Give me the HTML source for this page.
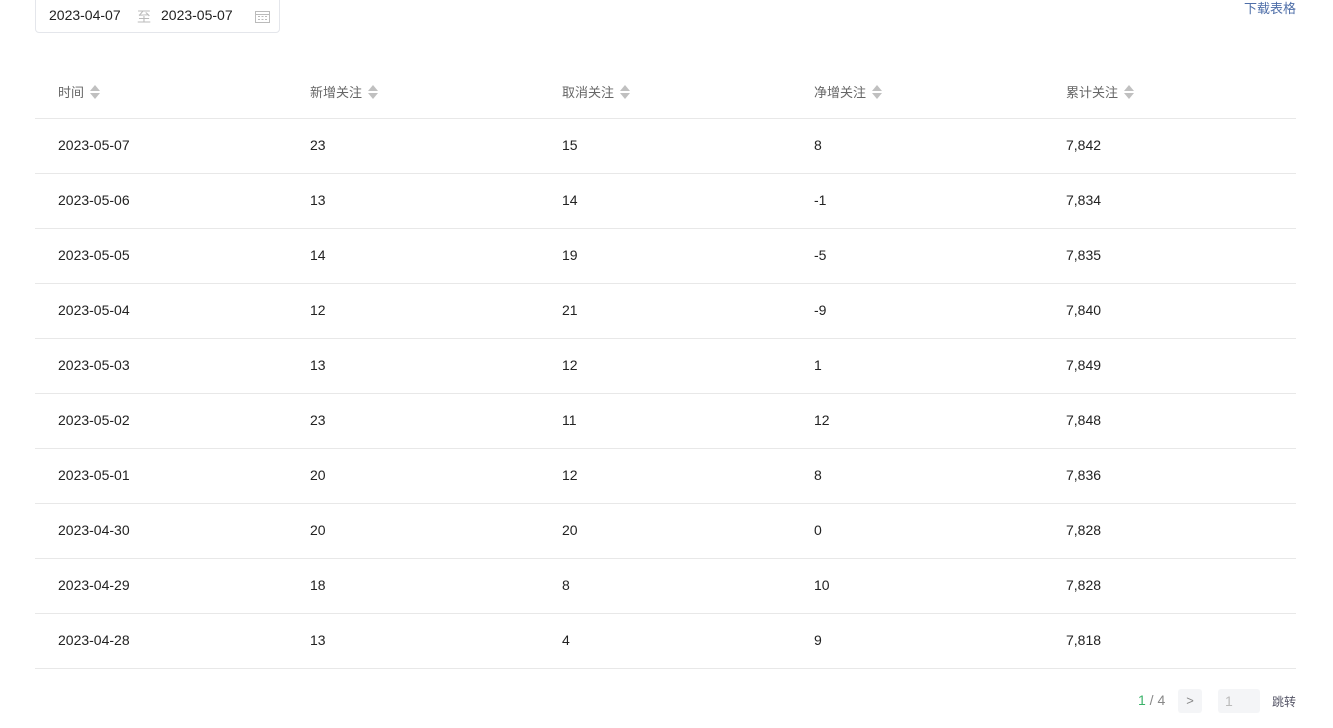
<!DOCTYPE html>
<html><head><meta charset="utf-8"><style>
body{margin:0;width:1333px;height:728px;background:#fff;font-family:"Liberation Sans","Noto Sans CJK SC",sans-serif;color:#333;position:relative;overflow:hidden}
.date{position:absolute;left:35px;top:-6px;width:245px;height:39px;border:1px solid #e4e6eb;border-radius:4px;box-sizing:border-box;font-size:14px;color:#222}
.date span{position:absolute;top:12px}
.dl{position:absolute;right:37px;top:-2px;font-size:13px;color:#4e6ea8}
table{position:absolute;left:35px;top:65px;width:1261px;border-collapse:collapse;font-size:14px;table-layout:fixed}
th{height:53px;text-align:left;font-weight:normal;color:#666;font-size:13px;padding:0 0 0 23px;border-bottom:1px solid #e8e8e8}
td{height:54px;padding:0 0 0 23px;border-bottom:1px solid #e8e8e8;color:#222;vertical-align:middle}
td span{position:relative;top:-1px}
.s{display:inline-block;vertical-align:middle;margin-left:6px;position:relative;width:10px;height:16px;top:-1px}
.s:before,.s:after{content:"";position:absolute;left:0;border-left:5px solid transparent;border-right:5px solid transparent}
.s:before{top:1px;border-bottom:6px solid #c0c0c0}
.s:after{top:9px;border-top:6px solid #c0c0c0}
.pg{position:absolute;top:689px;font-size:14px}
</style></head><body>
<div class="date"><span style="left:13px">2023-04-07</span><span style="left:101px;color:#bbb">至</span><span style="left:125px">2023-05-07</span>
<svg style="position:absolute;left:219px;top:15px" width="15" height="13" viewBox="0 0 15 13"><rect x="0.5" y="1.5" width="14" height="11" fill="none" stroke="#bbb"/><line x1="0.5" y1="4.5" x2="14.5" y2="4.5" stroke="#bbb"/><g fill="#bbb"><rect x="3" y="6" width="2" height="1"/><rect x="6.5" y="6" width="2" height="1"/><rect x="10" y="6" width="2" height="1"/><rect x="3" y="9" width="2" height="1"/><rect x="6.5" y="9" width="2" height="1"/><rect x="10" y="9" width="2" height="1"/></g></svg></div>
<div class="dl">下载表格</div>
<table>
<colgroup><col style="width:252px"><col style="width:252px"><col style="width:252px"><col style="width:252px"><col style="width:253px"></colgroup>
<tr><th>时间<i class="s"></i></th><th>新增关注<i class="s"></i></th><th>取消关注<i class="s"></i></th><th>净增关注<i class="s"></i></th><th>累计关注<i class="s"></i></th></tr>
<tr><td><span>2023-05-07</span></td><td><span>23</span></td><td><span>15</span></td><td><span>8</span></td><td><span>7,842</span></td></tr>
<tr><td><span>2023-05-06</span></td><td><span>13</span></td><td><span>14</span></td><td><span>-1</span></td><td><span>7,834</span></td></tr>
<tr><td><span>2023-05-05</span></td><td><span>14</span></td><td><span>19</span></td><td><span>-5</span></td><td><span>7,835</span></td></tr>
<tr><td><span>2023-05-04</span></td><td><span>12</span></td><td><span>21</span></td><td><span>-9</span></td><td><span>7,840</span></td></tr>
<tr><td><span>2023-05-03</span></td><td><span>13</span></td><td><span>12</span></td><td><span>1</span></td><td><span>7,849</span></td></tr>
<tr><td><span>2023-05-02</span></td><td><span>23</span></td><td><span>11</span></td><td><span>12</span></td><td><span>7,848</span></td></tr>
<tr><td><span>2023-05-01</span></td><td><span>20</span></td><td><span>12</span></td><td><span>8</span></td><td><span>7,836</span></td></tr>
<tr><td><span>2023-04-30</span></td><td><span>20</span></td><td><span>20</span></td><td><span>0</span></td><td><span>7,828</span></td></tr>
<tr><td><span>2023-04-29</span></td><td><span>18</span></td><td><span>8</span></td><td><span>10</span></td><td><span>7,828</span></td></tr>
<tr><td><span>2023-04-28</span></td><td><span>13</span></td><td><span>4</span></td><td><span>9</span></td><td><span>7,818</span></td></tr>
</table>
<div class="pg" style="left:1138px;top:692px;color:#888"><span style="color:#3bb36a">1</span> / 4</div>
<div class="pg" style="left:1178px;width:24px;height:24px;background:#f4f5f7;border-radius:3px;text-align:center;line-height:24px;color:#888;font-size:13px">&gt;</div>
<div class="pg" style="left:1218px;width:42px;height:24px;background:#f4f5f7;border-radius:3px;line-height:24px;color:#bbb;padding-left:7px;box-sizing:border-box">1</div>
<div class="pg" style="left:1272px;top:693px;font-size:12px;color:#556">跳转</div>
</body></html>
